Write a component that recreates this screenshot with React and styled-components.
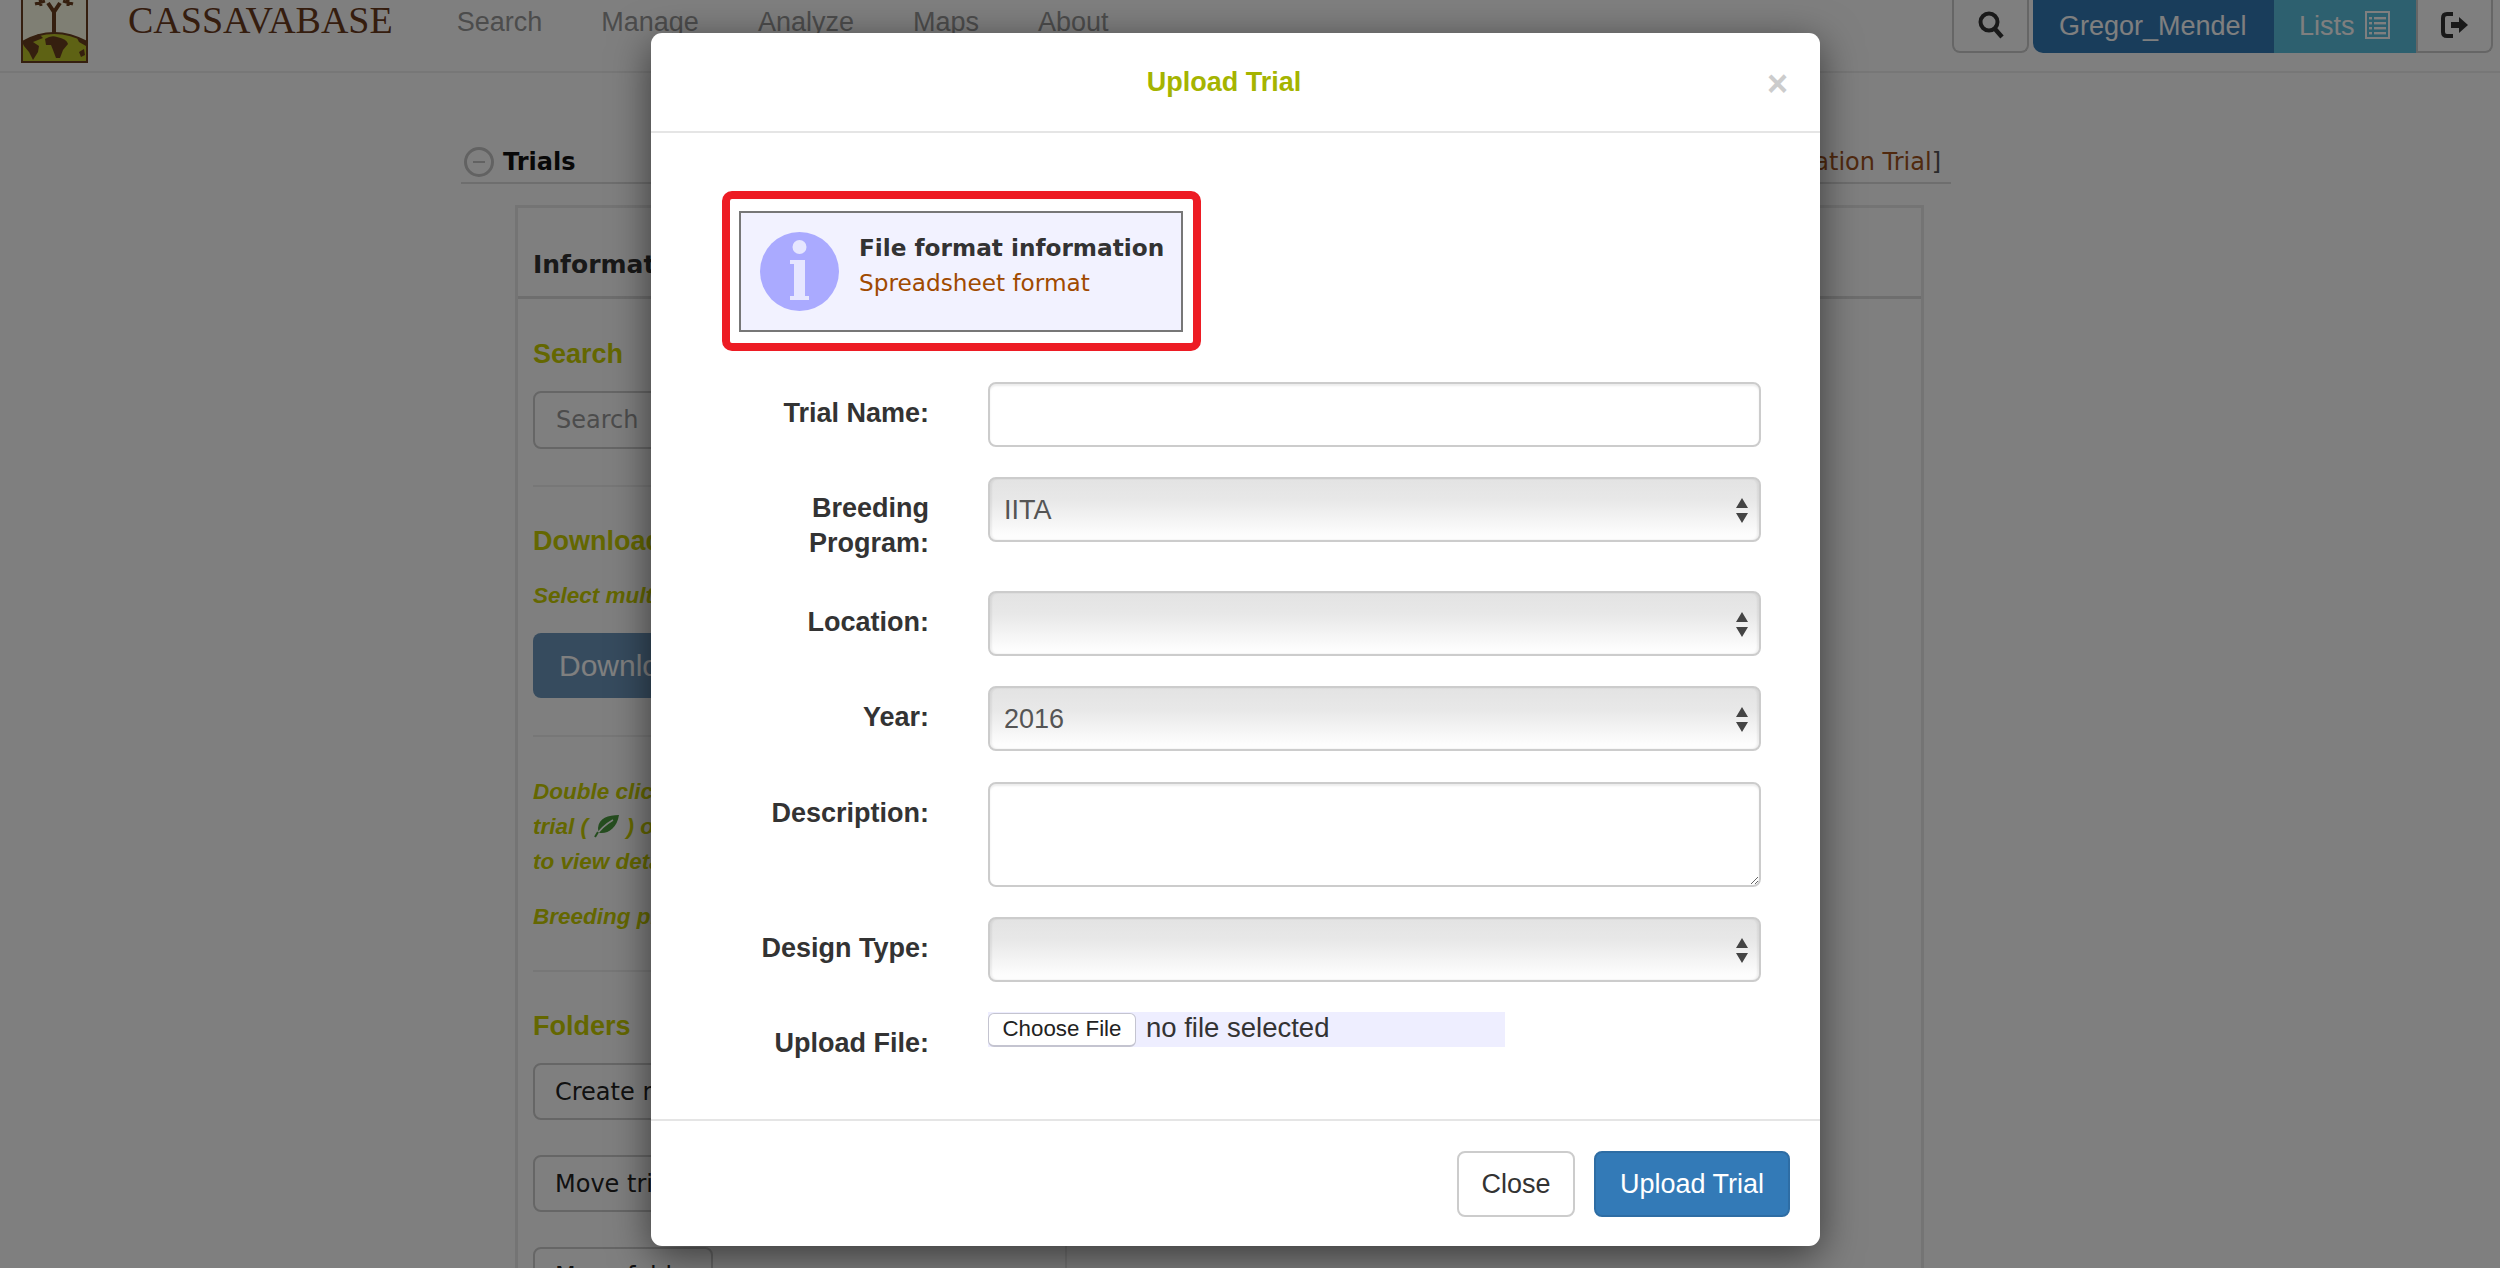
import React from 'react';
import styled, { createGlobalStyle } from 'styled-components';

const Global = createGlobalStyle`
  html, body { margin: 0; padding: 0; background: #fff; }
  body { font-family: "Liberation Sans", Arial, sans-serif; color: #333; }
  * { box-sizing: border-box; }
`;
const sans = `"Liberation Sans", Arial, sans-serif`;
const deja = `"DejaVu Sans", Verdana, sans-serif`;

const Page = styled.div`
  position: relative; width: 2500px; height: 1268px; overflow: hidden; background: #fff;
`;
const Navbar = styled.header`
  display: flex; align-items: flex-start; height: 73px; padding-left: 21px;
  border-bottom: 2px solid #eee;
`;
const Brand = styled.span`
  font-family: "Liberation Serif", serif; font-size: 38px; line-height: 41px; color: #6b3a1c;
  margin-left: 40px; white-space: nowrap;
`;
const NavLinks = styled.nav`
  display: flex; gap: 59px; margin-left: 64px;
`;
const NavLink = styled.a`
  font-size: 27px; line-height: 44px; color: #999; white-space: nowrap;
`;
const NavRight = styled.div`
  display: flex; margin-left: auto; margin-right: 7px; height: 54px; margin-top: -1px;
`;
const IconBtn = styled.div`
  display: flex; align-items: center; justify-content: center; width: ${p => p.$w}px; height: 100%;
  background: #fff; border: 2px solid #ccc; border-top: 0; margin-right: ${p => p.$mr || 0}px;
  border-radius: ${p => p.$r || '0 0 8px 8px'}; color: #333;
`;
const UserBtn = styled.div`
  display: flex; align-items: center; gap: 10px; height: 100%; width: ${p => p.$w}px;
  background: ${p => p.$bg}; color: #fff; font-size: 27px; padding-left: ${p => p.$pl}px;
  border-radius: ${p => p.$r || 0};
`;
const Content = styled.main`
  width: 1490px; margin-left: 461px;
`;
const SectionHead = styled.div`
  display: flex; align-items: center; height: 111px; padding: 68px 10px 0 3px;
  border-bottom: 2px solid #ddd;
`;
const SectionTitle = styled.strong`
  font-family: ${deja}; font-size: 24px; color: #111; margin-left: 9px;
`;
const SectionLinks = styled.span`
  margin-left: auto; font-family: ${deja}; font-size: 24px; color: #a0521c;
  b { font-weight: 400; color: #555; }
`;
const Panel = styled.section`
  margin: 21px 27px 0 54px; border: solid #e8e8e8; border-width: 3px 3px 0 3px; height: 1100px;
`;
const TabRow = styled.div`
  height: 91px; padding: 40px 0 0 15px; border-bottom: 3px solid #ddd;
  font-family: ${deja}; font-weight: 700; font-size: 25px; line-height: 34px; color: #333;
`;
const Columns = styled.div`
  display: grid; grid-template-columns: 549px 1fr;
`;
const Sidebar = styled.div`
  padding: 0 13px 0 15px; border-right: 2px solid #e8e8e8; height: 1100px; white-space: nowrap;
`;
const Heading = styled.h4`
  margin: ${p => p.$mt}px 0 ${p => p.$mb}px; font-size: 27px; line-height: 30px; font-weight: 700; color: #c8ce00;
`;
const FakeInput = styled.div`
  display: flex; align-items: center; height: 58px; padding-left: 21px;
  border: 2px solid #ccc; border-radius: 8px;
  font-family: ${deja}; font-size: 24px; color: #999;
`;
const Rule = styled.hr`
  border: 0; border-top: 2px solid #eee; margin: ${p => p.$mt}px 0 0;
`;
const Hint = styled.p`
  margin: ${p => p.$mt}px 0 0; font-size: 22.5px; line-height: 35px; font-style: italic; font-weight: 700; color: #c8ce00;
`;
const PrimaryFake = styled.div`
  display: flex; align-items: center; height: 65px; padding-left: 26px; margin-top: 20px;
  background: #6d97bd; border-radius: 8px; color: #fff; font-size: 30px;
`;
const GhostBtn = styled.div`
  display: flex; align-items: center; width: fit-content; height: 57px; padding: 0 14px 0 20px; margin-top: ${p => p.$mt}px;
  border: 2px solid #ccc; border-radius: 8px; font-family: ${deja}; font-size: 24px; color: #222;
`;
const Backdrop = styled.div`
  position: absolute; inset: 0; background: rgba(0, 0, 0, .5);
`;
const Modal = styled.div`
  position: absolute; left: 651px; top: 33px; width: 1169px; height: 1213px; background: #fff;
  border-radius: 11px; box-shadow: 0 10px 40px rgba(0, 0, 0, .55); display: flex; flex-direction: column;
`;
const ModalHead = styled.div`
  position: relative; flex: none; height: 100px; border-bottom: 2px solid #e5e5e5;
  display: flex; align-items: center; justify-content: center;
`;
const ModalTitle = styled.h4`
  margin: 0 0 0 -23px; font-size: 27px; font-weight: 700; color: #a5b400;
`;
const CloseX = styled.span`
  position: absolute; right: 32px; top: 33px; font-size: 36px; line-height: 36px; font-weight: 700; color: #ccc;
`;
const ModalBody = styled.div`
  flex: 1; padding: 58px 37px 0 71px;
`;
const Callout = styled.div`
  width: 479px; height: 160px; margin-bottom: 31px; padding: 12px 10px 11px 9px;
  border: 8px solid #ed1c24; border-radius: 10px; background: #fff;
`;
const InfoBox = styled.div`
  display: flex; align-items: center; height: 100%; padding-left: 19px;
  border: 2px solid #777; background: #f2f2ff; gap: 20px;
`;
const InfoText = styled.div`
  font-family: ${deja}; font-size: 23.2px; line-height: 35px; white-space: nowrap; padding-bottom: 13px;
  strong { display: block; color: #333; }
  span { color: #a04a00; }
`;
const Row = styled.div`
  display: grid; grid-template-columns: 207px 773px; column-gap: 59px; margin-bottom: 30.4px;
`;
const Label = styled.label`
  font-size: 27px; line-height: 35px; font-weight: 700; text-align: right; color: #333;
  padding-top: 14px; margin-bottom: -1px;
`;
const controlBase = `
  display: block; width: 100%; border: 2px solid #ccc; border-radius: 8px;
  font-family: ${sans}; font-size: 27px; color: #555; outline: 0;
`;
const TextInput = styled.input`
  ${controlBase}
  height: 65px; background: #fff; box-shadow: inset 0 2px 2px rgba(0,0,0,.075);
`;
const TextArea = styled.textarea`
  ${controlBase}
  height: 105px; background: #fff; box-shadow: inset 0 2px 2px rgba(0,0,0,.075); resize: vertical;
`;
const SelectWrap = styled.div`
  position: relative; height: 65px;
`;
const Select = styled.select`
  ${controlBase}
  height: 65px; padding: 0 14px; appearance: none; -webkit-appearance: none;
  background: linear-gradient(#e3e3e3, #e8e8e8 35%, #fdfdfd 92%);
  box-shadow: inset 2px 0 2px rgba(0,0,0,.06), inset -2px 0 2px rgba(0,0,0,.06);
`;
const Arrows = styled.svg`
  position: absolute; right: 13px; top: 21px; width: 12px; height: 25px; pointer-events: none;
`;
const FileField = styled.div`
  display: flex; align-items: center; width: 517px; height: 35px; background: #eeeeff;
`;
const FileBtn = styled.button`
  width: 148px; height: 34px; padding: 0; margin-right: 10px; background: #fff;
  border: 1px solid #c4c4d0; border-bottom-width: 2px; border-radius: 6px;
  font-family: ${sans}; font-size: 22.3px; color: #222;
`;
const FileName = styled.span`
  font-size: 27.5px; color: #333; margin-top: -3px;
`;
const ModalFoot = styled.div`
  flex: none; height: 127px; border-top: 2px solid #e5e5e5;
  display: flex; justify-content: flex-end; gap: 19px; padding: 30px 30px 0 0;
`;
const Btn = styled.button`
  height: 66px; width: ${p => p.$w}px; padding: 0; font-family: ${sans}; font-size: 27px; border-radius: 8px;
  border: 2px solid ${p => (p.$primary ? '#2e6da4' : '#ccc')};
  background: ${p => (p.$primary ? '#337ab7' : '#fff')};
  color: ${p => (p.$primary ? '#fff' : '#333')};
`;

const Logo = () => (
  <svg width="67" height="63" viewBox="0 0 67 63" style={{ display: 'block', flex: 'none' }}>
    <rect x="1" y="-4" width="65" height="65" fill="#fffee8" stroke="#6a3f1e" strokeWidth="2" />
    <path d="M33 34 L33 12 L27 3 M33 12 L39 3" fill="none" stroke="#6a3f1e" strokeWidth="4" />
    <path d="M14 4 L24 1 M19 -1 L20 6 M52 4 L42 1 M47 -1 L47 6" stroke="#6a3f1e" strokeWidth="3" />
    <path d="M1 42 Q33 24 66 42 L66 62 L1 62 Z" fill="#bcc428" stroke="#6a3f1e" strokeWidth="2" />
    <path d="M24 39 Q30 35 36 37 Q46 39 47 44 L42 50 L39 58 L35 58 L32 50 L30 45 L25 45 Z" fill="#6a3f1e" />
    <path d="M1 42 L18 34 L22 38 L12 42 L18 46 L17 52 L12 60 L8 52 L3 46 Z M56 38 L66 42 L65 46 L58 42 Z M58 52 L63 49 L64 55 L60 57 Z" fill="#6a3f1e" />
  </svg>
);
const SearchIcon = () => (
  <svg width="26" height="28" viewBox="0 0 26 28">
    <circle cx="11" cy="11" r="8.5" fill="none" stroke="currentColor" strokeWidth="4" />
    <path d="M17 18 L24 26" stroke="currentColor" strokeWidth="4.5" />
  </svg>
);
const ListIcon = () => (
  <svg width="25" height="28" viewBox="0 0 25 28" style={{ marginTop: -2 }}>
    <rect x="1" y="1" width="23" height="26" fill="none" stroke="#fff" strokeWidth="2" />
    {[6, 11, 16, 21].map(y => (
      <g key={y}>
        <rect x="4" y={y} width="3" height="2.4" fill="#fff" />
        <rect x="9" y={y} width="12" height="2.4" fill="#fff" />
      </g>
    ))}
  </svg>
);
const LogoutIcon = () => (
  <svg width="28" height="26" viewBox="0 0 28 26">
    <path d="M12 2 H6 Q2 2 2 6 V20 Q2 24 6 24 H12" fill="none" stroke="currentColor" strokeWidth="4" />
    <path d="M10 10 H18 V5 L27 13 L18 21 V16 H10 Z" fill="currentColor" />
  </svg>
);
const MinusCircle = () => (
  <svg width="30" height="30" viewBox="0 0 30 30" style={{ flex: 'none' }}>
    <circle cx="15" cy="15" r="13.5" fill="#fff" stroke="#c4c4c4" strokeWidth="3" />
    <path d="M9 15 H21" stroke="#c4c4c4" strokeWidth="2" />
  </svg>
);
const Leaf = () => (
  <svg width="26" height="24" viewBox="0 0 26 24" style={{ verticalAlign: -4 }}>
    <path d="M25 1 C14 1 5 4 4 14 C4 17 5 19 6 19 C14 20 23 14 25 1 Z" fill="#4a9a3e" />
    <path d="M1 23 C6 15 12 10 19 6" fill="none" stroke="#fff" strokeWidth="1.5" />
    <path d="M1 23 L4 18" stroke="#4a9a3e" strokeWidth="2" />
  </svg>
);
const InfoIcon = () => (
  <svg width="79" height="79" viewBox="0 0 79 79" style={{ flex: 'none' }}>
    <circle cx="39.5" cy="39.5" r="39.5" fill="#aaaaff" />
    <circle cx="39.5" cy="15" r="7" fill="#e6e6ff" />
    <rect x="30" y="28" width="15" height="4" fill="#e6e6ff" />
    <rect x="34" y="28" width="11" height="37" fill="#e6e6ff" />
    <rect x="30" y="64" width="19" height="4" fill="#e6e6ff" />
  </svg>
);

const SelectField = ({ value }) => (
  <SelectWrap>
    <Select defaultValue={value || ''} aria-label="select">
      <option value={value || ''}>{value || ''}</option>
    </Select>
    <Arrows viewBox="0 0 12 25">
      <path d="M6 0 L12 10 H0 Z M0 15 H12 L6 25 Z" fill="#444" />
    </Arrows>
  </SelectWrap>
);

export default function App() {
  return (
    <Page>
      <Global />
      <Navbar>
        <Logo />
        <Brand>CASSAVABASE</Brand>
        <NavLinks>
          <NavLink>Search</NavLink>
          <NavLink>Manage</NavLink>
          <NavLink>Analyze</NavLink>
          <NavLink>Maps</NavLink>
          <NavLink>About</NavLink>
        </NavLinks>
        <NavRight>
          <IconBtn $w={77} $mr={4}><SearchIcon /></IconBtn>
          <UserBtn $w={241} $pl={26} $bg="#337ab7" $r="0 0 0 10px">Gregor_Mendel</UserBtn>
          <UserBtn $w={142} $pl={25} $bg="#5bc0de">Lists <ListIcon /></UserBtn>
          <IconBtn $w={77} $r="0 0 8px 0"><LogoutIcon /></IconBtn>
        </NavRight>
      </Navbar>
      <Content>
        <SectionHead>
          <MinusCircle />
          <SectionTitle>Trials</SectionTitle>
          <SectionLinks><b>[</b>Add Evaluation Trial<b>]</b></SectionLinks>
        </SectionHead>
        <Panel>
          <TabRow>Information</TabRow>
          <Columns>
            <Sidebar>
              <Heading $mt={40} $mb={22}>Search</Heading>
              <FakeInput>Search</FakeInput>
              <Rule $mt={36} />
              <Heading $mt={39} $mb={0}>Download</Heading>
              <Hint $mt={22}>Select multiple trials</Hint>
              <PrimaryFake>Download</PrimaryFake>
              <Rule $mt={37} />
              <Hint $mt={37}>Double click on a<br />trial ( <Leaf /> ) or folder<br />to view details</Hint>
              <Hint $mt={20}>Breeding programs</Hint>
              <Rule $mt={36} />
              <Heading $mt={39} $mb={22}>Folders</Heading>
              <GhostBtn $mt={0}>Create new folder</GhostBtn>
              <GhostBtn $mt={35}>Move trial</GhostBtn>
              <GhostBtn $mt={35}>Move folder</GhostBtn>
            </Sidebar>
            <div />
          </Columns>
        </Panel>
      </Content>
      <Backdrop />
      <Modal>
        <ModalHead>
          <ModalTitle>Upload Trial</ModalTitle>
          <CloseX>×</CloseX>
        </ModalHead>
        <ModalBody>
          <Callout>
            <InfoBox>
              <InfoIcon />
              <InfoText>
                <strong>File format information</strong>
                <span>Spreadsheet format</span>
              </InfoText>
            </InfoBox>
          </Callout>
          <Row><Label>Trial Name:</Label><TextInput aria-label="Trial Name" /></Row>
          <Row><Label>Breeding Program:</Label><SelectField value="IITA" /></Row>
          <Row><Label>Location:</Label><SelectField /></Row>
          <Row><Label>Year:</Label><SelectField value="2016" /></Row>
          <Row><Label>Description:</Label><TextArea aria-label="Description" /></Row>
          <Row><Label>Design Type:</Label><SelectField /></Row>
          <Row>
            <Label>Upload File:</Label>
            <FileField>
              <FileBtn>Choose File</FileBtn>
              <FileName>no file selected</FileName>
            </FileField>
          </Row>
        </ModalBody>
        <ModalFoot>
          <Btn $w={118}>Close</Btn>
          <Btn $primary $w={196}>Upload Trial</Btn>
        </ModalFoot>
      </Modal>
    </Page>
  );
}
